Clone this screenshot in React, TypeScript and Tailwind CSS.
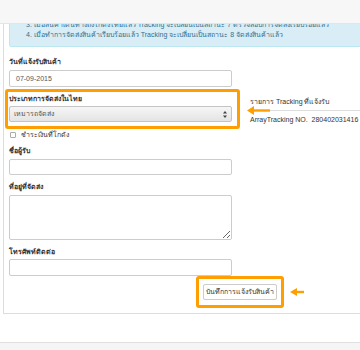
import React from "react";

function ArrowLeft({ w, h }: { w: number; h: number }) {
  const mid = h / 2;
  return (
    <svg width={w} height={h} viewBox={`0 0 ${w} ${h}`}>
      <polygon points={`0,${mid} 7,0 7,${h}`} fill="#ff9e00" />
      <rect x={6} y={mid - 1.2} width={w - 6} height={2.4} fill="#ff9e00" />
    </svg>
  );
}

export default function App() {
  return (
    <div className="relative w-[360px] h-[350px] overflow-hidden bg-white text-[#333] [font-family:'Liberation_Sans','Noto_Sans',sans-serif] text-[7px] leading-[10px]">
      <div className="flex flex-col">
        <div className="ml-[3px] border-l border-b border-[#dddddd] pl-[5px] pb-[5px]">
          <div className="mr-[-4px] bg-[#d9edf7] border border-[#bce8f1] rounded-bl-[2px] pt-[19px] pb-[6px] pl-[16px] text-[#31708f] whitespace-nowrap">
            <p>3. เมื่อสินค้าเดินทางถึงโกดังไทยแล้ว Tracking จะเปลี่ยนเป็นสถานะ 7 ตรวจสอบการจัดส่งเรียบร้อยแล้ว</p>
            <p>4. เมื่อทำการจัดส่งสินค้าเรียบร้อยแล้ว Tracking จะเปลี่ยนเป็นสถานะ 8 จัดส่งสินค้าแล้ว</p>
          </div>

          <div className="flex mt-[10px]">
            <div className="w-[223px] flex flex-col shrink-0">
              <label className="font-bold h-[10px]">วันที่แจ้งรับสินค้า</label>
              <div className="mt-[3px] h-[17px] border border-[#cccccc] rounded-[2px] flex items-center pl-[6px] text-[#555]">
                07-09-2015
              </div>

              <div className="mt-[2px] -ml-[4px] w-[235px] border-[3px] border-[#ff9e00] rounded-[3px] pl-[1px] pt-[2px] pb-[4px]">
                <label className="block font-bold h-[10px]">ประเภทการจัดส่งในไทย</label>
                <div className="mt-[2px] w-[223px] h-[16px] border border-[#c4c4c4] rounded-[2px] bg-gradient-to-b from-[#f6f6f6] to-[#e4e4e4] flex items-center justify-between pl-[4px] pr-[4px] text-[#555]">
                  <span>เหมารถจัดส่ง</span>
                  <svg width="4" height="7" viewBox="0 0 4 7">
                    <polygon points="2,0 4,2.6 0,2.6" fill="#444" />
                    <polygon points="2,7 4,4.4 0,4.4" fill="#444" />
                  </svg>
                </div>
              </div>

              <div className="mt-[1px] h-[10px] flex items-center">
                <span className="ml-[1px] w-[6px] h-[6px] border border-[#aaaaaa] rounded-[1px] bg-white" />
                <span className="ml-[5px]">ชำระเงินที่โกดัง</span>
              </div>

              <label className="mt-[6px] font-bold h-[10px]">ชื่อผู้รับ</label>
              <div className="mt-[3px] h-[16px] border border-[#cccccc] rounded-[2px]" />

              <label className="mt-[7px] font-bold h-[10px]">ที่อยู่ที่จัดส่ง</label>
              <textarea className="mt-[3px] h-[45px] w-full border border-[#cccccc] rounded-[2px] outline-none" />

              <label className="mt-[7px] font-bold h-[10px]">โทรศัพท์ติดต่อ</label>
              <div className="mt-[2px] h-[17px] border border-[#cccccc] rounded-[2px]" />
            </div>

            <div className="relative ml-[18px] flex-1 pt-[40px]">
              <div className="pb-[3px] border-b border-[#dddddd] h-[14px]">รายการ Tracking ที่แจ้งรับ</div>
              <div className="pt-[4px] whitespace-nowrap">ArrayTracking NO.&nbsp;&nbsp;280402031416</div>
              <div className="absolute left-[-3px] top-[49px]">
                <ArrowLeft w={23} h={9} />
              </div>
            </div>
          </div>

          <div className="flex items-center pl-[187px]">
            <div className="w-[88px] h-[32px] border-[3px] border-[#ff9e00] rounded-[3px] flex items-center justify-center">
              <button className="w-[74px] h-[16px] border border-[#cccccc] rounded-[2px] bg-white text-[#333] flex items-center justify-center">
                บันทึกการแจ้งรับสินค้า
              </button>
            </div>
            <div className="ml-[6px]">
              <ArrowLeft w={14} h={8} />
            </div>
          </div>
        </div>

        <div className="mt-[28px] h-[20px] bg-[#f5f5f5] border-t border-[#e0e0e0]" />
      </div>

      <div className="absolute top-0 left-0 right-0 h-[24px] bg-[#f7f7f7] border-b border-[#e4e4e4]" />
    </div>
  );
}
